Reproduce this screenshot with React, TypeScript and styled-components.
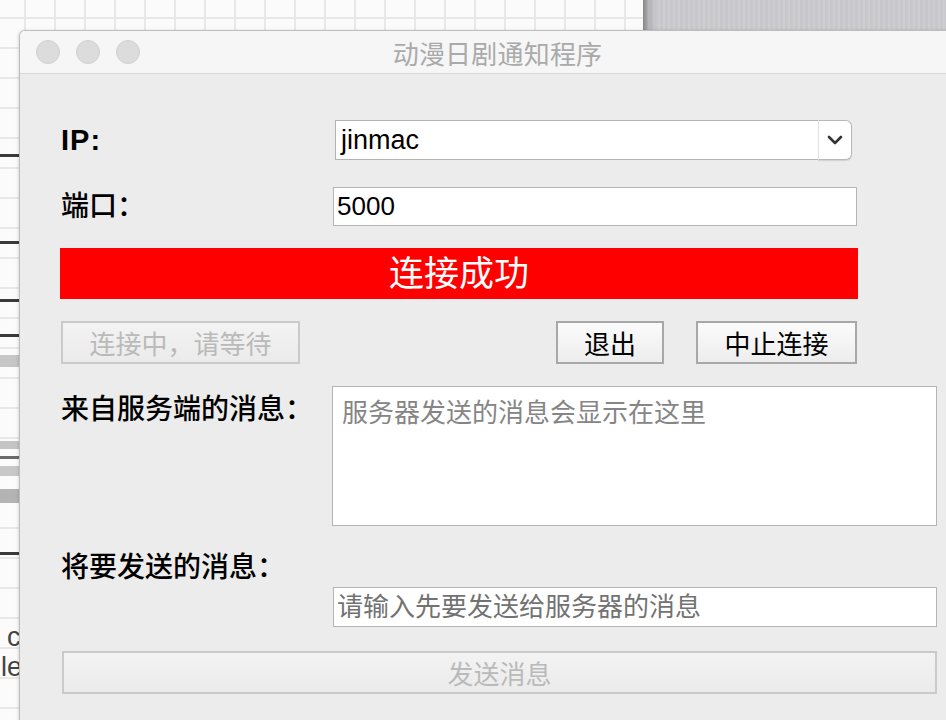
import React from "react";
import styled, { createGlobalStyle } from "styled-components";

const FONT = `"Liberation Sans", "Noto Sans CJK SC", sans-serif`;

const Global = createGlobalStyle`
  html, body { margin: 0; padding: 0; }
  body {
    width: 946px;
    height: 720px;
    overflow: hidden;
    font-family: ${FONT};
    background: #fbfbfb;
  }
  * { box-sizing: border-box; }
`;

const Desktop = styled.div`
  position: relative;
  width: 946px;
  height: 720px;
  overflow: hidden;
  background-color: #fbfbfb;
  background-image: linear-gradient(90deg, #e8e8e8 2px, transparent 2px),
    linear-gradient(#e8e8e8 2px, transparent 2px);
  background-size: 30px 30px;
  background-position: 24px 17px;
`;

const BackPanel = styled.div`
  position: absolute;
  left: 643px;
  top: 0;
  width: 303px;
  height: 40px;
  background: linear-gradient(90deg, rgba(0, 0, 0, 0.35) 0, rgba(0, 0, 0, 0.12) 5px, transparent 14px),
    repeating-linear-gradient(90deg, rgba(255, 255, 255, 0.1) 0 2px, transparent 2px 5px),
    #c8c8cc;
`;

const LeftDoc = styled.div`
  position: absolute;
  left: 0;
  top: 0;
  width: 22px;
  height: 720px;
  overflow: hidden;
  background:
    linear-gradient(#3a3a3a, #3a3a3a) 0 154px / 100% 3px no-repeat,
    linear-gradient(#3a3a3a, #3a3a3a) 0 241px / 100% 3px no-repeat,
    linear-gradient(#3a3a3a, #3a3a3a) 0 299px / 100% 3px no-repeat,
    linear-gradient(#3a3a3a, #3a3a3a) 0 334px / 100% 3px no-repeat,
    linear-gradient(#c6c6c6, #c6c6c6) 0 355px / 100% 12px no-repeat,
    linear-gradient(#c4c4c4, #c4c4c4) 0 441px / 100% 8px no-repeat,
    linear-gradient(#6a6a6a, #6a6a6a) 0 456px / 100% 3px no-repeat,
    linear-gradient(#c8c8c8, #c8c8c8) 0 466px / 100% 10px no-repeat,
    linear-gradient(#b4b4b4, #b4b4b4) 0 489px / 100% 14px no-repeat,
    linear-gradient(#3a3a3a, #3a3a3a) 0 552px / 100% 3px no-repeat;
  display: flex;
  flex-direction: column;
  padding-top: 622px;
`;

const Scrap = styled.div`
  font-family: "Liberation Sans", sans-serif;
  font-size: 27px;
  line-height: 30px;
  color: #444;
  white-space: nowrap;
  margin-left: ${(p) => p.$shift}px;
`;

const Window = styled.div`
  position: absolute;
  left: 19px;
  top: 30px;
  width: 957px;
  height: 700px;
  border-radius: 6px 6px 0 0;
  overflow: hidden;
  background: #ececec;
  border: 1px solid #bdbdbd;
  border-bottom: none;
  box-shadow: -1px 0 3px rgba(0, 0, 0, 0.12);
  display: flex;
  flex-direction: column;
`;

const TitleBar = styled.div`
  height: 43px;
  flex: none;
  background: #f6f6f6;
  border-bottom: 1px solid #d6d6d6;
  display: grid;
  grid-template-columns: 1fr auto 1fr;
  align-items: center;
`;

const Lights = styled.div`
  display: flex;
  gap: 16px;
  padding-left: 16px;
`;

const Light = styled.span`
  width: 24px;
  height: 24px;
  border-radius: 50%;
  background: #dcdcdc;
  border: 1px solid #d0d0d0;
`;

const Title = styled.div`
  font-size: 26px;
  color: #aaaaaa;
  letter-spacing: 0.2px;
`;

const Content = styled.div`
  padding: 46px 0 0 40px;
  display: flex;
  flex-direction: column;
  width: 917px;
`;

const FieldRow = styled.div`
  display: grid;
  grid-template-columns: ${(p) => p.$label}px ${(p) => p.$field}px;
  align-items: ${(p) => (p.$top ? "start" : "center")};
  margin-top: ${(p) => p.$mt || 0}px;
`;

const Label = styled.div`
  font-size: 28px;
  line-height: 34px;
  font-weight: 500;
  color: #000;
  padding-left: 1px;
  padding-top: ${(p) => p.$pt || 0}px;
  white-space: nowrap;
`;

const LatinLabel = styled(Label)`
  font-size: 29px;
  font-weight: 700;
  letter-spacing: 1px;
`;

const ComboBox = styled.div`
  display: flex;
  height: 40px;
`;

const ComboText = styled.div`
  flex: 1;
  background: #fff;
  border: 1px solid #b3b3b3;
  border-right: none;
  font-size: 27px;
  line-height: 38px;
  padding-left: 5px;
  color: #000;
`;

const ComboButton = styled.div`
  width: 34px;
  background: #fff;
  border: 1px solid #b8b8b8;
  border-left: 1px solid #e2e2e2;
  border-radius: 0 6px 6px 0;
  box-shadow: 0 1px 1px rgba(0, 0, 0, 0.12);
  display: flex;
  align-items: center;
  justify-content: center;
`;

const TextInput = styled.input`
  display: block;
  width: ${(p) => p.$w}px;
  height: ${(p) => p.$h || 40}px;
  margin: ${(p) => p.$m || "0"};
  border: 1px solid #b4b4b4;
  background: #fff;
  font-family: ${FONT};
  font-size: 26px;
  padding: 0 0 0 3px;
  color: #000;
  outline: none;
  &::placeholder {
    color: #727272;
  }
`;

const MessageBox = styled.textarea`
  display: block;
  width: 605px;
  height: 140px;
  border: 1px solid #b4b4b4;
  background: #fff;
  font-family: ${FONT};
  font-size: 26px;
  line-height: 31px;
  padding: 11px 9px;
  resize: none;
  outline: none;
  &::placeholder {
    color: #858585;
  }
`;

const StatusBar = styled.div`
  margin-top: 22px;
  width: 798px;
  height: 51px;
  background: #ff0000;
  color: #fff;
  font-size: 35px;
  line-height: 51px;
  text-align: center;
`;

const ButtonRow = styled.div`
  margin-top: 22px;
  width: 797px;
  display: flex;
  justify-content: space-between;
  padding-left: 1px;
`;

const ButtonGroup = styled.div`
  display: flex;
  gap: 32px;
`;

const Button = styled.button`
  width: ${(p) => p.$w}px;
  height: 43px;
  margin: ${(p) => p.$m || "0"};
  border: 2px solid ${(p) => (p.disabled ? "#cacaca" : "#a8a8a8")};
  background: ${(p) =>
    p.disabled
      ? "linear-gradient(#f3f3f3, #ebebeb)"
      : "linear-gradient(#fbfbfb, #ededed)"};
  color: ${(p) => (p.disabled ? "#bababa" : "#000")};
  font-family: ${FONT};
  font-size: 26px;
  padding: 0;
  border-radius: 0;
`;

const SendLabel = styled(Label)`
  margin-top: 25px;
  line-height: 34px;
`;

function Chevron() {
  return (
    <svg width="16" height="10" viewBox="0 0 16 10">
      <path d="M2 2 L8 8 L14 2" fill="none" stroke="#333" strokeWidth="2.6" strokeLinecap="round" strokeLinejoin="round" />
    </svg>
  );
}

export default function App() {
  return (
    <>
      <Global />
      <Desktop>
        <BackPanel />
        <LeftDoc>
          <Scrap $shift={-8}>t c</Scrap>
          <Scrap $shift={1}>le</Scrap>
        </LeftDoc>
        <Window>
          <TitleBar>
            <Lights>
              <Light />
              <Light />
              <Light />
            </Lights>
            <Title>动漫日剧通知程序</Title>
            <div />
          </TitleBar>
          <Content>
            <FieldRow $label={275} $field={517}>
              <LatinLabel>IP:</LatinLabel>
              <ComboBox>
                <ComboText>jinmac</ComboText>
                <ComboButton>
                  <Chevron />
                </ComboButton>
              </ComboBox>
            </FieldRow>
            <FieldRow $label={273} $field={524} $mt={27}>
              <Label>端口：</Label>
              <TextInput $w={524} $h={39} defaultValue="5000" />
            </FieldRow>
            <StatusBar>连接成功</StatusBar>
            <ButtonRow>
              <Button $w={239} disabled>
                连接中，请等待
              </Button>
              <ButtonGroup>
                <Button $w={108}>退出</Button>
                <Button $w={161}>中止连接</Button>
              </ButtonGroup>
            </ButtonRow>
            <FieldRow $label={272} $field={605} $mt={22} $top>
              <Label $pt={7}>来自服务端的消息：</Label>
              <MessageBox placeholder="服务器发送的消息会显示在这里" readOnly />
            </FieldRow>
            <SendLabel>将要发送的消息：</SendLabel>
            <TextInput $w={604} $m="2px 0 0 273px" placeholder="请输入先要发送给服务器的消息" />
            <Button $w={875} $m="24px 0 0 2px" disabled>
              发送消息
            </Button>
          </Content>
        </Window>
      </Desktop>
    </>
  );
}
